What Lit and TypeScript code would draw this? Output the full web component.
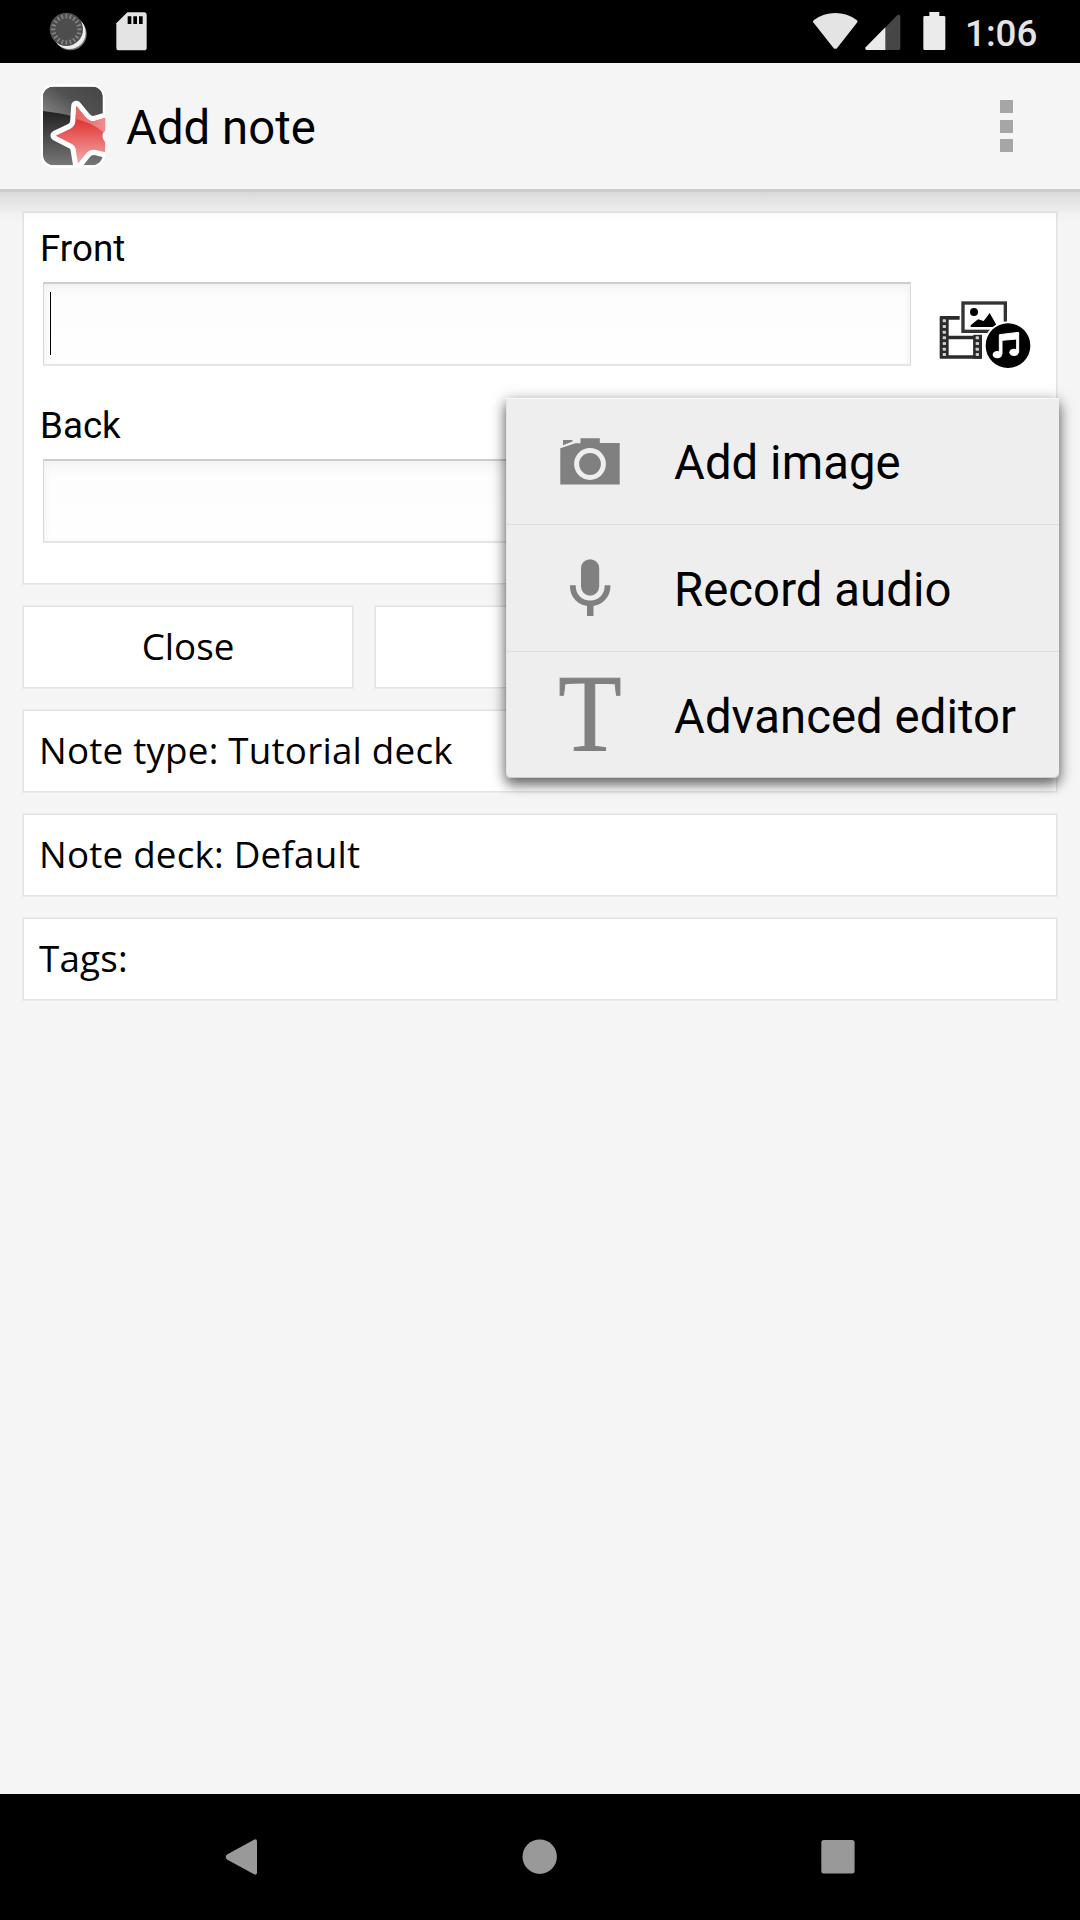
import { LitElement, html, css, svg } from "lit";
import { customElement, state } from "lit/decorators.js";

const cameraIcon = html`<svg class="glyph" viewBox="0 0 90 90" width="90" height="90">
  <g fill="#808080">
    <path d="M18 24H27.5V25.5L18 29.3Z"/>
    <path d="M15.300 32.200L30.300 27.300H35.500V22.200H54.800V27H74.700V68.500H15.300Z"/>
  </g>
  <circle cx="45" cy="48" r="13.4" fill="none" stroke="#eee" stroke-width="5"/>
</svg>`;

const micIcon = html`<svg class="glyph" viewBox="0 0 90 90" width="90" height="90">
  <rect x="36" y="16.200" width="18.2" height="36.5" rx="9.1" fill="#808080"/>
  <path d="M27.800 42.200C27.800 53.500 35.300 60.300 45.100 60.300S62.600 53.500 62.600 42.200" fill="none" stroke="#808080" stroke-width="5.8"/>
  <path d="M42 59H48.500V73H42Z" fill="#808080"/>
</svg>`;

const textIcon = html`<svg class="glyph" viewBox="0 0 90 90" width="90" height="90">
  <text class="serif" x="13.300" y="81.200" textLength="63.400" lengthAdjust="spacingAndGlyphs">T</text>
</svg>`;

@customElement("app-root")
export class AppRoot extends LitElement {
  @state() private menu = [
    { label: "Add image", icon: cameraIcon },
    { label: "Record audio", icon: micIcon },
    { label: "Advanced editor", icon: textIcon },
  ];

  static styles = css`
    :host {
      display: flex;
      flex-direction: column;
      box-sizing: border-box;
      width: 1080px;
      height: 1920px;
      overflow: hidden;
      background: #f5f5f5;
      color: #000;
      font-family: Roboto, "Noto Sans", sans-serif;
      font-size: 36.75px;
    }
    * { box-sizing: border-box; }
    svg { display: block; flex: none; }
    .glyph { overflow: visible; }
    .status {
      display: flex;
      justify-content: space-between;
      height: 63px;
      flex: none;
      background: #000;
    }
    .status-right { display: flex; }
    .time {
      width: 115px;
      padding-top: 2px;
      line-height: 63px;
      font-weight: 500;
      color: #e4e4e4;
    }
    .appbar {
      display: flex;
      align-items: center;
      height: 126px;
      flex: none;
      padding: 0 67px 0 39px;
    }
    .logo { margin-bottom: 2px; }
    .title {
      flex: 1;
      margin-left: 18px;
      padding-top: 4px;
      font-size: 47.25px;
      letter-spacing: .06px;
      line-height: 56px;
    }
    .dots { display: grid; grid-template-rows: 13px 13px 13px; row-gap: 6.5px; }
    .dot { width: 13px; background: #a6a6a6; }
    .content {
      position: relative;
      display: flex;
      flex-direction: column;
      gap: 20px;
      flex: 1;
      padding: 22px 22px 0;
    }
    .shade {
      position: absolute;
      left: 0;
      right: 0;
      top: 0;
      height: 36px;
      background: linear-gradient(rgba(0,0,0,.17) 0 3px, rgba(0,0,0,.115) 3px, rgba(0,0,0,.07) 11px, rgba(0,0,0,.035) 21px, rgba(0,0,0,.01) 25px, transparent);
    }
    .box {
      background: #fff;
      border: 1px solid #ebebeb;
      box-shadow: inset 0 0 0 1px #e3e3e3;
    }
    .card { height: 374px; padding: 13px 17px 0 17px; }
    .field { height: 177px; padding-left: 3px; }
    .label {
      height: 57px;
      padding-top: 2px;
      margin-left: -3px;
      line-height: 43px;
    }
    .line { display: flex; }
    .input {
      width: 868px;
      height: 84px;
      padding: 8px 6px;
      border: solid;
      border-width: 2px 1px 2px 1px;
      border-color: #cdcdcd #dadada #e6e6e6 #d8d8d8;
      background: linear-gradient(#f3f3f3, #fafafa 8px, #fdfdfd 14px, #fefefe);
      box-shadow: inset 4px 0 5px -2px #f3f3f3, inset -4px 0 5px -2px #f3f3f3;
    }
    .caret { width: 1px; height: 63px; background: #000; }
    .media { margin: 16px 0 0 24px; }
    .buttons { display: grid; grid-template-columns: repeat(3, 1fr); gap: 20px; }
    .button, .row {
      height: 84px;
      padding-bottom: 2px;
      font-family: "Open Sans", "Noto Sans", sans-serif;
      line-height: 81px;
    }
    .button { text-align: center; }
    .row { padding-left: 16px; letter-spacing: .22px; }
    .menu {
      position: absolute;
      left: 506px;
      top: 209px;
      width: 553px;
      height: 380px;
      border-radius: 1px 1px 5px 5px;
      background: #eee;
      box-shadow: inset 0 1px 0 #fafafa, inset 0 -1px 0 #ccc, inset 1px 0 0 #e4e4e4,
        0 3px 16px rgba(0,0,0,.36), 0 7px 12px rgba(0,0,0,.42);
    }
    .item {
      display: flex;
      align-items: center;
      height: 127px;
      padding-left: 39px;
      border-bottom: 1px solid #dcdcdc;
    }
    .item:last-child { border-bottom: 0; height: 126px; }
    .item-text {
      margin-left: 39px;
      padding-top: 4px;
      font-size: 47.25px;
      letter-spacing: .07px;
      line-height: 56px;
      white-space: nowrap;
    }
    .serif { font-family: "Liberation Serif", serif; font-size: 110px; fill: #808080; stroke: #808080; stroke-width: 1px; }
    .nav {
      display: grid;
      grid-template-columns: 298px 298px 298px;
      justify-content: center;
      justify-items: center;
      align-items: center;
      height: 126px;
      flex: none;
      background: #000;
    }
  `;

  private ticks() {
    return Array.from({ length: 20 }, (_, i) => svg`<path d="M199 42V55" transform="rotate(${i * 18} 199 88)"/>`);
  }

  private holes(x: number, ys: number[]) {
    return ys.map((y) => svg`<rect x=${x} y=${y} width="10" height="9" rx="2"/>`);
  }

  private field(label: string, focused: boolean) {
    return html`<div class="field">
      <div class="label">${label}</div>
      <div class="line">
        <div class="input">${focused ? html`<div class="caret"></div>` : ""}</div>
        <svg class="media" viewBox="165 84 294 219" width="98" height="73">
          <rect x="179" y="138" width="127" height="128" rx="3" fill="#2b2b2b"/>
          <path d="M206 149H300V197H206Z M206 208H280V256H206Z" fill="#fff"/>
          <path d="M280 193H306V266H280Z" fill="#2b2b2b"/>
          <g fill="#ccc">${this.holes(188, [148, 165, 182, 199, 216, 233, 249])}${this.holes(287, [199, 216, 233, 249])}</g>
          <path d="M239 90H386V194H239Z" fill="#fff"/>
          <rect x="249" y="99" width="127" height="85" fill="#fff" stroke="#333" stroke-width="10"/>
          <circle cx="282" cy="126" r="12"/>
          <path d="M272 171V166L294 148L311 153L329 129L348 163V171Z"/>
          <circle cx="384" cy="227" r="73" fill="#fff"/>
          <circle cx="384" cy="227" r="67"/>
          <path d="M358 194L416 187V247H410V207L366 211V253H358Z" fill="#fff" stroke="#fff" stroke-width="3"/>
          <ellipse cx="352" cy="254" rx="14" ry="11" fill="#fff"/>
          <ellipse cx="402" cy="247" rx="14" ry="11" fill="#fff"/>
        </svg>
      </div>
    </div>`;
  }

  render() {
    return html`
      <div class="status">
        <svg viewBox="0 0 480 189" width="160" height="63">
          <circle cx="211" cy="102" r="49" fill="#777"/>
          <circle cx="208" cy="98" r="49" fill="#eee"/>
          <circle cx="199" cy="88" r="50" fill="#4d4d4d"/>
          <g stroke="#858585" stroke-width="5">${this.ticks()}</g>
          <path d="M382 37H432Q440 37 440 45V143Q440 151 432 151H357Q349 151 349 143V70Z" fill="#e4e4e4"/>
          <path d="M383 49H394V72H383Z M400 49H411V72H400Z M417 49H428V72H417Z"/>
        </svg>
        <div class="status-right">
          <svg viewBox="10 0 540 189" width="180" height="63">
            <path d="M94 66Q93 63 97 60Q125 39 161 39T225 60Q229 63 227 67L167 143Q161 150 155 143Z" fill="#e4e4e4"/>
            <path d="M252 143L345 47Q355 41 356 49V145Q356 150 351 150H255Q249 149 252 143Z" fill="#464646"/>
            <path d="M252 142L311 82V150H255Q249 149 252 142Z" fill="#ebebeb"/>
            <path d="M443 36H473V48H487Q491 48 491 52V146Q491 150 487 150H429Q425 150 425 146V52Q425 48 429 48H443Z" fill="#ebebeb"/>
          </svg>
          <div class="time">1:06</div>
        </div>
      </div>
      <div class="appbar">
        <svg class="logo" viewBox="118 243 207 264" width="69" height="88">
          <defs>
            <linearGradient id="dark" x1="0" y1="0" x2="0" y2="1"><stop offset=".3" stop-color="#202020"/><stop offset="1" stop-color="#777"/></linearGradient>
            <linearGradient id="gloss" x1="1" y1="0" x2="0" y2="1"><stop offset="0" stop-color="#454545"/><stop offset=".4" stop-color="#505050"/><stop offset="1" stop-color="#989898"/></linearGradient>
            <linearGradient id="red" x1="0" y1="0" x2="0" y2="1"><stop offset=".3" stop-color="#e23a3a"/><stop offset="1" stop-color="#f6b4b4"/></linearGradient>
            <linearGradient id="pink" x1="0" y1="0" x2="1" y2="0"><stop offset="0" stop-color="#e56060"/><stop offset="1" stop-color="#f09090"/></linearGradient>
            <clipPath id="tile"><rect x="130" y="260" width="179" height="236" rx="32"/></clipPath>
            <clipPath id="edge"><path d="M117 243H317V495H300Q285 502 270 502H200V495H117Z"/></clipPath>
            <clipPath id="starclip"><path d="M230 318L257 351Q269 366 285 363L317 353V391Q300 405 317 428V457L288 450Q270 447 258 462L235 491L228 448Q226 436 215 431L168 407L212 386Q226 379 227 364Z"/></clipPath>
          </defs>
          <rect x="123" y="253" width="192" height="250" rx="38" fill="#fff"/>
          <g clip-path="url(#tile)">
            <rect x="130" y="260" width="179" height="236" fill="url(#dark)"/>
            <path d="M130 260H309V385Q240 345 130 333Z" fill="url(#gloss)"/>
          </g>
          <g clip-path="url(#edge)">
            <path d="M230 318L257 351Q269 366 285 363L340 347L308 391Q300 405 308 420L340 463L288 450Q270 447 258 462L235 491L228 448Q226 436 215 431L168 407L212 386Q226 379 227 364Z" fill="#fff" stroke="#fff" stroke-width="31" stroke-linejoin="round"/>
          </g>
          <g clip-path="url(#starclip)">
            <rect x="160" y="310" width="160" height="190" fill="url(#red)"/>
            <path d="M220 310H320V403Q275 365 220 355Z" fill="url(#pink)"/>
          </g>
        </svg>
        <div class="title">Add note</div>
        <div class="dots"><div class="dot"></div><div class="dot"></div><div class="dot"></div></div>
      </div>
      <div class="content">
        <div class="box card">${this.field("Front", true)}${this.field("Back", false)}</div>
        <div class="buttons">
          <div class="box button">Close</div>
          <div class="box button"></div>
          <div class="box button"></div>
        </div>
        <div class="box row">Note type: Tutorial deck</div>
        <div class="box row">Note deck: Default</div>
        <div class="box row">Tags:</div>
        <div class="shade"></div>
        <div class="menu">
          ${this.menu.map((m) => html`<div class="item">${m.icon}<div class="item-text">${m.label}</div></div>`)}
        </div>
      </div>
      <div class="nav">
        <svg viewBox="0 0 36 40" width="36" height="40"><path d="M3 17.5Q.5 20 3 22.5L30 37.2Q33 38.6 33 35.5V4.500Q33 1.400 30 2.800Z" fill="#999"/></svg>
        <svg viewBox="0 0 36 36" width="36" height="36"><circle cx="17.700" cy="17.700" r="17.200" fill="#999"/></svg>
        <svg viewBox="0 0 36 36" width="36" height="36"><rect x="1.300" y="1" width="33.300" height="33.500" rx="2.500" fill="#999"/></svg>
      </div>
    `;
  }
}
